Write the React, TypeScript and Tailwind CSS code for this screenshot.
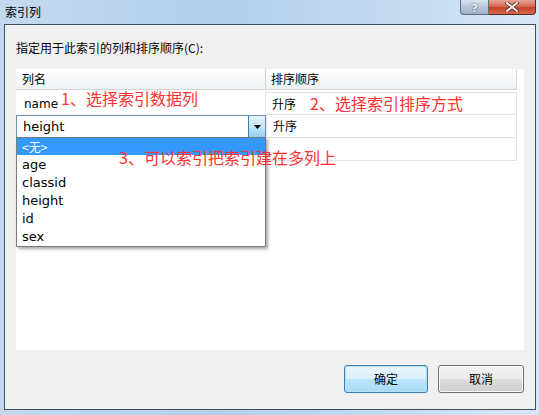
import React from "react";

const cjk = { fontFamily: '"Noto Sans CJK SC", "Noto Sans", sans-serif' };
const ui = { fontFamily: '"DejaVu Sans", "Noto Sans CJK SC", sans-serif' };

export default function App() {
  return (
    <div className="w-[539px] h-[415px] flex flex-col pl-[4px] pr-[3px] pb-[5px] bg-[linear-gradient(90deg,#c4d9ef,#b3cfea_40%,#c9ddf2_80%,#d9e7f5)] overflow-hidden">
      {/* title bar */}
      <div className="h-[24px] flex items-start relative">
        <span className="text-[12px] leading-none mt-[6px] ml-[1px] text-black" style={cjk}>
          索引列
        </span>
        <div className="absolute right-[0px] top-0 flex">
          <div className="w-[29px] h-[15px] rounded-bl-[4px] border border-t-0 border-[#5c6e82] bg-[linear-gradient(#d8e3ef,#b5c5d8_50%,#9fb2c9)] flex items-center justify-center text-[11px] font-bold text-white leading-none" style={{ textShadow: "0 0 2px #2a3a50" }}>
            ?
          </div>
          <div className="w-[47px] h-[15px] rounded-br-[4px] border border-l-0 border-t-0 border-[#5c2a24] bg-[linear-gradient(#e8a597,#d46a55_45%,#c4412a_55%,#d96b4e)] flex items-center justify-center">
            <svg width="14" height="10" viewBox="0 0 14 10">
              <path d="M2 1 L12 9 M12 1 L2 9" stroke="#3a1a14" strokeWidth="3.4" strokeLinecap="square" />
              <path d="M2 1 L12 9 M12 1 L2 9" stroke="#ffffff" strokeWidth="2" strokeLinecap="square" />
            </svg>
          </div>
        </div>
      </div>
      {/* client */}
      <div className="flex-1 border border-[#3d4f63] bg-[#f0f0f0] flex flex-col pl-[11px] pr-[11px] relative">
        <div className="h-[44px] flex items-center pt-[1px] text-[12px] text-black" style={cjk}>
          指定用于此索引的列和排序顺序(C):
        </div>
        <div className="h-[281px] bg-white relative pr-[7px]">
          {/* header */}
          <div className="h-[21px] flex border-b border-[#d5d5d5] bg-[linear-gradient(#ffffff,#f7f8f9_50%,#f0f1f2)] border-r border-r-[#d5d5d5]">
            <div className="w-[250px] border-r border-[#d5d5d5] flex items-center pl-[6px] text-[12px] text-black" style={cjk}>
              列名
            </div>
            <div className="flex-1 flex items-center pl-[5px] text-[12px] text-black" style={cjk}>
              排序顺序
            </div>
          </div>
          {/* rows */}
          <div className="mt-[2px] flex h-[23px]">
            <div className="w-[249px] flex items-center pl-[8px] text-[12px] text-black" style={ui}>
              name
            </div>
            <div className="flex-1 border border-[#e2e2e2] flex items-center pl-[6px] text-[12px] text-black" style={cjk}>
              升序
            </div>
          </div>
          <div className="flex h-[23px]">
            <div className="w-[250px] h-[23px] border border-[#6f8fb5] flex bg-white">
              <div className="flex-1 flex items-center pl-[6px] text-[13px] text-black" style={ui}>
                height
              </div>
              <div className="w-[17px] border-l border-[#3c7fb1] bg-[linear-gradient(#e5f4fc,#c4e5f6_50%,#98d1ef)] flex items-center justify-center">
                <svg width="7" height="4" viewBox="0 0 7 4">
                  <path d="M0 0 H7 L3.5 4 Z" fill="#000" />
                </svg>
              </div>
            </div>
            <div className="flex-1 border border-t-0 border-[#e2e2e2] flex items-center pl-[6px] text-[12px] text-black" style={cjk}>
              升序
            </div>
          </div>
          <div className="flex h-[23px]">
            <div className="w-[249px]" />
            <div className="flex-1 border border-t-0 border-[#e2e2e2]" />
          </div>

          {/* dropdown list */}
          <div className="absolute left-0 top-[68px] w-[250px] h-[110px] bg-white border border-[#7a7a7a] shadow-[2px_2px_3px_rgba(0,0,0,0.35)] flex flex-col text-[13px] text-black" style={ui}>
            <div className="h-[17px] bg-[#3399ff] text-white flex items-center pl-[5px] text-[12px]" style={cjk}>
              &lt;无&gt;
            </div>
            {["age", "classid", "height", "id", "sex"].map((t) => (
              <div key={t} className="h-[18px] flex items-center pl-[5px] pt-[2px]">
                {t}
              </div>
            ))}
          </div>

          {/* annotations */}
          <div className="absolute left-[45px] top-[21px] text-[16px] text-[#ff3030] leading-none" style={cjk}>
            1、选择索引数据列
          </div>
          <div className="absolute left-[294px] top-[26px] text-[16px] text-[#ff3030] leading-none" style={cjk}>
            2、选择索引排序方式
          </div>
          <div className="absolute left-[103px] top-[80px] text-[16px] text-[#ff3030] leading-none" style={cjk}>
            3、可以索引把索引建在多列上
          </div>
        </div>
        {/* buttons */}
        <div className="flex justify-end gap-[10px] mt-[15px]">
          <button className="w-[84px] h-[28px] rounded-[3px] border border-[#3c7fb1] bg-[linear-gradient(#eaf6fd,#d9f0fc_50%,#bee6fd_51%,#a7d9f5)] text-[12px] text-black shadow-[inset_0_0_0_1px_#b6e0f8]" style={cjk}>
            确定
          </button>
          <button className="w-[86px] h-[28px] rounded-[3px] border border-[#707070] bg-[linear-gradient(#f2f2f2,#ebebeb_50%,#dddddd_51%,#cfcfcf)] text-[12px] text-black shadow-[inset_0_0_0_1px_#fcfcfc]" style={cjk}>
            取消
          </button>
        </div>
      </div>
    </div>
  );
}
